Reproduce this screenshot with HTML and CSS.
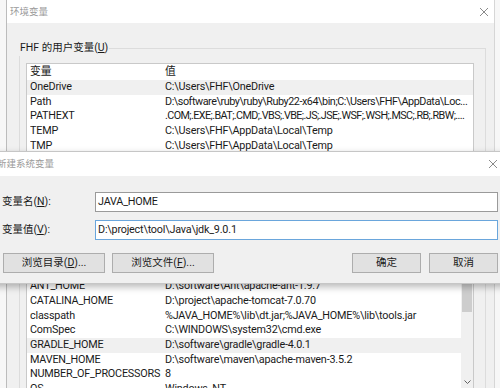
FILE: index.html
```html
<!DOCTYPE html>
<html>
<head>
  <meta charset="utf8">
  <title>环境变量</title>
  <link rel="stylesheet" href="styles.css">
</head>
<body>

<div class="env">
  <div class="win-title">
    <span>环境变量</span>
    <svg class="close" width="8" height="8" viewBox="0 0 8 8"><path d="M0 0L8 8M8 0L0 8" stroke="#8a8a8a" stroke-width="1"/></svg>
  </div>
  <div class="env-body">
    <fieldset class="group group-user">
      <legend>FHF 的用户变量(<u>U</u>)</legend>
      <div class="list list-user">
        <div class="list-head"><span>变量</span><span>值</span></div>
        <div class="row on"><span>OneDrive</span><span>C:\Users\FHF\OneDrive</span></div>
        <div class="row"><span>Path</span><span class="tight">D:\software\ruby\ruby\Ruby22-x64\bin;C:\Users\FHF\AppData\Loc...</span></div>
        <div class="row"><span>PATHEXT</span><span class="tighter">.COM;.EXE;.BAT;.CMD;.VBS;.VBE;.JS;.JSE;.WSF;.WSH;.MSC;.RB;.RBW;....</span></div>
        <div class="row"><span>TEMP</span><span>C:\Users\FHF\AppData\Local\Temp</span></div>
        <div class="row"><span>TMP</span><span>C:\Users\FHF\AppData\Local\Temp</span></div>
      </div>
    </fieldset>
    <fieldset class="group group-sys">
      <legend>系统变量(<u>S</u>)</legend>
      <div class="list list-sys">
        <div class="list-rows">
          <div class="list-head"></div>
          <div class="row"><span>ANT_HOME</span><span>D:\software\Ant\apache-ant-1.9.7</span></div>
          <div class="row"><span>CATALINA_HOME</span><span>D:\project\apache-tomcat-7.0.70</span></div>
          <div class="row"><span>classpath</span><span>%JAVA_HOME%\lib\dt.jar;%JAVA_HOME%\lib\tools.jar</span></div>
          <div class="row"><span>ComSpec</span><span>C:\WINDOWS\system32\cmd.exe</span></div>
          <div class="row on"><span>GRADLE_HOME</span><span>D:\software\gradle\gradle-4.0.1</span></div>
          <div class="row"><span>MAVEN_HOME</span><span>D:\software\maven\apache-maven-3.5.2</span></div>
          <div class="row"><span>NUMBER_OF_PROCESSORS</span><span>8</span></div>
          <div class="row"><span>OS</span><span>Windows_NT</span></div>
        </div>
        <div class="scrollbar">
          <div class="thumb"></div>
          <svg class="arrow" width="7" height="4" viewBox="0 0 7 4"><path d="M0.5 0.5L3.5 3.5L6.5 0.5" fill="none" stroke="#606060" stroke-width="1"/></svg>
        </div>
      </div>
    </fieldset>
  </div>
</div>

<div class="dlg">
  <div class="win-title dlg-title">
    <span>新建系统变量</span>
    <svg class="close" width="8" height="8" viewBox="0 0 8 8"><path d="M0 0L8 8M8 0L0 8" stroke="#8a8a8a" stroke-width="1"/></svg>
  </div>
  <div class="dlg-body">
    <div class="field">
      <label>变量名(<u>N</u>):</label>
      <div class="input">JAVA_HOME</div>
    </div>
    <div class="field">
      <label>变量值(<u>V</u>):</label>
      <div class="input focus">D:\project\tool\Java\jdk_9.0.1</div>
    </div>
    <div class="btns">
      <button class="btn btn-wide">浏览目录(<u>D</u>)...</button>
      <button class="btn btn-wide">浏览文件(<u>F</u>)...</button>
      <span class="spacer"></span>
      <button class="btn">确定</button>
      <button class="btn">取消</button>
    </div>
  </div>
</div>

</body>
</html>
```

FILE: styles.css
```css
* { box-sizing: border-box; }
body { margin: 0; height: 388px; overflow: hidden; position: relative; background: #f7f7f7; color: #1a1a1a; font: 10.8px/1.2 Roboto, "Noto Sans CJK SC", sans-serif; letter-spacing: -0.2px; }

/* window title bars */
.win-title { display: flex; align-items: center; justify-content: space-between; background: #fff; color: #9a9a9a; font-size: 9.5px; letter-spacing: 0; }
.win-title .close { display: block; }

/* back window: 环境变量 */
.env { margin-left: 6px; width: 489px; height: 400px; background: #f0f0f0; border-left: 1px solid #bcbcbc; border-right: 1px solid #d6d6d6; }
.env .win-title { height: 23px; padding: 0 6px 0 3px; }
.env-body { padding: 17px 8px 0 12px; }

.group { margin: 0; padding: 7px 11px 40px 6px; border: 1px solid #dcdcdc; }
.group legend { margin-left: -7px; padding: 0 1px; line-height: 16px; font-size: 10.5px; letter-spacing: 0; }
.group-sys { margin-top: 8.4px; padding-bottom: 0; }

.list { background: #fff; border: 1px solid #c9c9c9; }
.list-user { height: 127px; }
.list-sys { display: flex; height: 129px; }
.list-rows { flex: 1; min-width: 0; }

.list-head, .row { display: grid; grid-template-columns: 135px 1fr; align-items: center; padding-left: 3px; white-space: nowrap; }
.list-head { height: 16px; letter-spacing: 0; }
.row { height: 14.7px; }
.row span { overflow: hidden; }
.row .tight { letter-spacing: -0.45px; }
.row .tighter { letter-spacing: -0.6px; }
.row.on { background: #f0f0f0; }

.scrollbar { width: 12px; display: flex; flex-direction: column; align-items: center; background: #f0f0f0; padding-top: 16px; }
.scrollbar .thumb { width: 10px; height: 33px; background: #cdcdcd; }
.scrollbar .arrow { margin-top: auto; margin-bottom: 6px; }

/* front dialog: 新建系统变量 */
.dlg { position: absolute; left: -12px; top: 151px; width: 520px; background: #f0f0f0; border: 1px solid #c6c6c6; box-shadow: 0 3px 7px rgba(0, 0, 0, 0.28); }
.dlg-title { height: 24px; padding: 0 10px 0 8px; }
.dlg-body { padding: 16px 9px 10px 13px; font-size: 10.5px; letter-spacing: 0; }

.field { display: flex; align-items: center; margin-bottom: 8px; }
.field label { width: 93px; }
.input { flex: 1; height: 20px; line-height: 18px; padding: 0 2px; background: #fff; border: 1px solid #9a9a9a; font-size: 10.8px; letter-spacing: -0.2px; }
.input.focus { border-color: #6aa6dc; }

.btns { display: flex; gap: 7px; margin-top: 13px; padding-left: 1px; }
.spacer { flex: 1; }
.btn { width: 69px; height: 20px; padding: 0; font: inherit; color: #1a1a1a; background: #e1e1e1; border: 1px solid #adadad; }
.btn-wide { width: 102px; }
.btns .btn:last-child { margin-left: 1px; }
```
